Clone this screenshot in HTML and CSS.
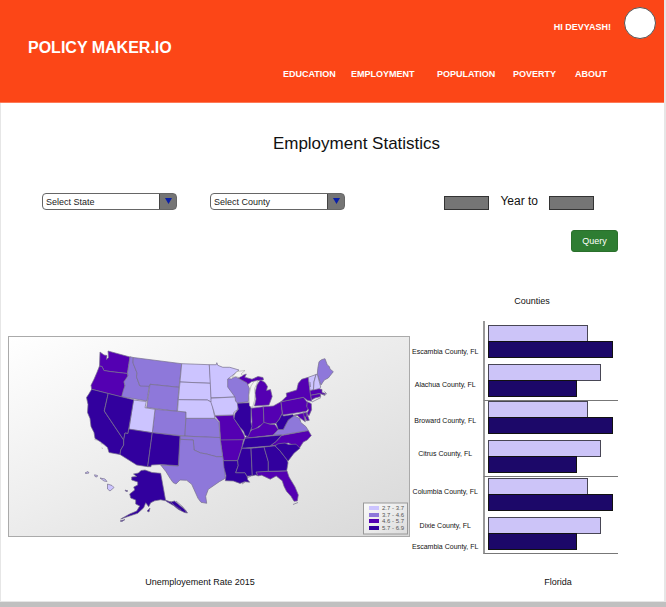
FILE: index.html
```html
<!DOCTYPE html>
<html lang="en">
<head>
<meta charset="utf-8">
<meta name="viewport" content="width=device-width, initial-scale=1">
<title>Policy Maker.io</title>
<link rel="stylesheet" href="styles.css">
</head>
<body>
<div class="page">
  <header class="header">
    <a class="brand" href="#">POLICY MAKER.IO</a>
    <div class="header-side">
      <div class="user"><span class="greeting">HI DEVYASH!</span><span class="avatar"></span></div>
      <nav class="nav">
        <a href="#">EDUCATION</a>
        <a href="#">EMPLOYMENT</a>
        <a href="#">POPULATION</a>
        <a href="#">POVERTY</a>
        <a href="#">ABOUT</a>
      </nav>
    </div>
  </header>
  <main class="main">
    <h1 class="title">Employment Statistics</h1>
    <form class="filters">
      <div class="filter-row">
        <div class="picker">
          <select aria-label="State"><option>Select State</option></select>
          <svg class="arrow" viewBox="0 0 17 16"><path d="M5 5h7l-3.500 6z"/></svg>
        </div>
        <div class="picker">
          <select aria-label="County"><option>Select County</option></select>
          <svg class="arrow" viewBox="0 0 17 16"><path d="M5 5h7l-3.500 6z"/></svg>
        </div>
        <div class="years">
          <input type="text" id="from-year" aria-label="From year">
          <label for="to-year">Year to</label>
          <input type="text" id="to-year">
        </div>
      </div>
      <button class="query" type="button">Query</button>
    </form>
    <div class="charts">
      <figure class="map-figure">
        <svg class="map" viewBox="8 336 402 201" role="img" aria-label="Unemployment rate by state">
          <defs>
            <linearGradient id="sky" x1="0" y1="0" x2="1" y2="1">
              <stop offset="0" stop-color="#fff"/><stop offset="1" stop-color="#d8d8d8"/>
            </linearGradient>
            <linearGradient id="key" x1="0" y1="0" x2="1" y2="1">
              <stop offset="0" stop-color="#fafafa"/><stop offset="1" stop-color="#dcdcdc"/>
            </linearGradient>
          </defs>
          <rect x="8.500" y="336.500" width="401" height="200" fill="url(#sky)" stroke="#aaa"/>
          <g class="states">
            <g class="r3">
              <path d="M100 352l4 3 3 .5-.5 4 2-2-.5-6.500L130 357l-2.500 16.500-17.500-2-6-1-2-4-2.500-.5z"/>
              <path d="M99.500 366l2.500.5 2 4 6 1 17.500 2 .5 3-4 5.500 1 4-1.500 5-1.800 6-30-7.700-.7-4 3-6 3-7z"/>
              <path d="M215 416l18.500-1 .5 3.500 6 9 4 7.500 1 3-2 2-22.500.3-1-18.500z"/>
              <path d="M220.300 440l23.200-.3-1.800 8.600-4 12.400h-14.500l-.5-4z"/>
              <path d="M238 378l4.500-2.500 3.800-1.500-1.500 3.200 7.200 2 6-2.700 5 1 .5 2.500-6 .5-6 1.200-4.500 3.300-4-3.500z"/>
              <path d="M254.500 406l1.500-7-1-6 2-8 2-3 1.500-2 4.500 2.500 2.500 4-1 4 4-1 1.700 7-3.200 8.500z"/>
              <path d="M251 408.300l12.300-1.600.7 16.600-5 3-4 3-4 .5 1-8z"/>
              <path d="M263.300 406.700l10-.7 7.700-4.300 1.300 11.600-3 6-3.300 4-6 .7-6-1z"/>
              <path d="M245 438.300l3-4 4-4.500 7-2.500 5-5 6 2 5 .3 3.300 5-5 5.500z"/>
              <path d="M281 401.700l22.300-4.400 4 5-.5 4 2 2-2.500 3-23.600 3.700z"/>
              <path d="M281 401.700l5.700-5.500-.5-3 10.500-3.200 1.600-6.700 3.400-4 6.600-2 1.700 13.500 1.700 10.500-4.400-1-4-3z"/>
              <path d="M307.300 401.700l4 2 .3 6-2.600 6-2.200-2.500 2-3.200-2-3z"/>
              <path d="M293.500 415.300l13-3 2.800 8-2.500.5-2-4.500.5 5.500-5.500-4-2-2z"/>
              <path d="M310 390.500l8-2 4 1 0 3 3.500 1-1 1.500-5-1.500-9 1.800z"/>
              <path d="M310.700 395.300l9.500-1.700.5 3-5.700 1.400-3.500 2z"/>
              <path d="M270 446l6-4.500 5.700-6 26.600-5 3 5-4 4.500-4 2-4 6.300-11-5.300-10 2z"/>
              <path d="M256 471.700l31-.8 2 6 6 10 3.300 8-1 6-3.300.4-3-5-4.500-5-2.500-5-1.800-5.500-6-4.800-6 3.200-8.500-4-4 .8z"/>
            </g>
            <g class="r2">
              <path d="M130 356.700l3.300.8-.3 5 4 10-.5 4 3 9h9.800l-2.300 15.500-25.300-4.300 1.800-7 1.500-4-1-4 4-6-.5-3z"/>
              <path d="M133.300 357.500l48.400 6.200-2.700 23.600-29-3-.7 2-9.300-.3-3.500-9 .5-4-4-10z"/>
              <path d="M150 384.300l29 3-2 24-30.300-3.800z"/>
              <path d="M155 409.300l31 2.700-1 24-32.700-3.300z"/>
              <path d="M186 418.300h29l2 2 2 2 1 15.500-35-1.800.5-11z"/>
              <path d="M180 436l40 1.500 2.700 19.200h-6l-5-1-5-1.700-6-1-6.700-3-.7-10-13.300-.7z"/>
              <path d="M180 439.300l13.300.7.7 10 6.700 3 6 1 10 2.700h6l2 10 .6 11.600-6 3.400-11 7.600-2.600 7 1 7-5.700-1-3-4-6.300-14-5-4-6.700-.3-4 4-3-1.500-3-4.200-4-6.600-5.300-6.700 17.600 1z"/>
              <path d="M227.300 378.500l4 .5 4-2.300 11.500 6 2.500 5.600-1 13.400-11.500 1.600-3-6.600-6.300-5-1-6z"/>
              <path d="M273.300 435l5-5.500h5l2.500-5 2.500-4.500 5-4.500 6.500 3 1 4 5 4 2.500 4-26.600 4.500z"/>
              <path d="M317.300 374.300l.5-6 1.200-6.600 2.500-2 3.500-1 2.300 6.300 2 1.500.7 2.500 3.300 2.700-5 6.300-4 2-3.300 5z"/>
            </g>
            <g class="r1">
              <path d="M133.300 400l13 1.500-1.300 6.200 10 1.600-2.700 23.400-23.300-3.400z"/>
              <path d="M181.700 363.700l27.600 1 1.500 18.600-30.800-1.300z"/>
              <path d="M180 382l30.700 1.300.5 15 .5 4-4.400-2.300-29-.3z"/>
              <path d="M178.300 399.700l29 .3 4.400 2.300 3.300 16h-29v-6.300l-8.500-.8z"/>
              <path d="M209.300 364.700h7l.5-2 1 2.600 5 2 7 0 9.200 2.700-7.300 6-4 3 0 8 7.300 10-24 .8z"/>
              <path d="M211 398.200l24-1.200.5 4 3.700 4-2 5-3 2-1 3-18.200.5-2-7-2-6z"/>
              <path d="M308.300 377.300l7.700-2.800-2 7-.5 8-3.500 1z"/>
              <path d="M316 374.500l1.300-.3 3.400 12.800-1 1.500-6.200 1.500.5-8z"/>
              <path d="M107.500 484l4.500 1.500 2 2-4 3.500-2.500-2z"/>
              <path d="M85 473l3-1.500 1 1.500-3 .5zM94.500 474.800l3 .7-.5 1.500-2-.5zM100 478l5 1 2 2.500-3-.5z"/>
            </g>
            <g class="r4">
              <path d="M91.700 389.300l16.500 4.200-4 17.500 19.500 29v5l-3 5-.7 4.500-11-2-1.500-5-3.500-3-4-3-5-3-1-6-3-6-1-8-2.500-6 .5-8-1.500-7 2-3z"/>
              <path d="M108.200 393.500l25.500 6.300-5 29.200-.7 4.500-3-.5-1.300 7-19.400-29z"/>
              <path d="M128.700 429l23.600 3.700-4.600 34-11-1.700-16.700-10.500.7-4.500 3-5v-5l1.300-7 3 .5z"/>
              <path d="M152.300 432.700l27.700 3.300-1.700 29.700-17.500-1.200-9.500.5-.3 1.700h-3.300z"/>
              <path d="M237.300 403.300l12-.6 1.700 5.600v14l1 4-2 6-2 4.500-3-1.500-1.500-4-3.500-4-6-8.700 1-5 3.300-4.300z"/>
              <path d="M276 423.300l3.300-4 3-6 1 2.700 9.500-1.500 1 1.500-5.500 4-2.500 4.500-2.500 5h-5z"/>
              <path d="M245 438.300l36.700-3.300-5.700 6.500-6 4.500-28.300 2.300z"/>
              <path d="M223.300 460.700h14.400l.5 5-2.500 7h9.500l2 4 .5 3 2 2.500-5-.5-4.700 1.700-6.700-2.400-8-.3.700-5-2-8z"/>
              <path d="M241.700 448.300h9.300l1.300 27.400-5.300.5-2-3.500h-9.300l2.500-7-.5-5z"/>
              <path d="M251 448.300l13-1.300 4.300 14.700v9.600l-12.300.7 1.500 3.500-2-.5-3.200.7z"/>
              <path d="M264 447l11-1.200 5 5 7 9 1 3-1.300 8-18.400.5v-9.600z"/>
              <path d="M275 445.800l3-2 7-.8 3.500 1.500 7.500-.3 4 4-6 5-6 8-8-10.400z"/>
              <path d="M133.500 474l5-1 2.500-2.500 4-.5 7 2.500 8.700.8 5 27.500-5-1-6 1-4 2-2 4-3-4-2 5-6 5.500-9 3-8 2.700 9-5 7-3 3-5-4-2 0-4-5-2-1-4 5-4-1-3 4-2v-3l-6-2 0-3 5-.5z"/>
              <path d="M165.500 500l5 2 4-1 6 5 5 4 2 3-3-.5-6-3-5-4-7-4zM125 490l3 1-2 .5zM120 521l5-1.500-3 2zM147 511l3-3-1 4z"/>
            </g>
            <path class="coast" d="M312 402l4-2 5-2.500M322 394l3 1.500 1.500-2-2-2M303 411l1 5 1 5M304 417l3 4M306 413l1 4M293 504.500l5-2M170 501l5 5 6 4M176 501l7 6 3 5M310 382l.5 5M242 484l3-2M247 478l4-2"/>
            <path class="islets" d="M94.500 439.500l2.500.5M101 443l1 1.500M102 447.500l.5 1.500"/>
          </g>
          <path class="lake" d="M249.500 406l-.5-11 2-9 3-4.500 4-1-1.500 4-2 4 .5 6-.5 6-2 7z"/>
          <path class="lake" d="M232 377.500l5-6 8-1-4 3.500 2 1.500-4 2-3-1z"/>
          <rect x="363.500" y="503" width="44" height="31" fill="url(#key)" stroke="#999"/>
          <g class="legend">
            <rect class="r1" x="369" y="506" width="10" height="4"/><text x="382" y="510">2.7 - 3.7</text>
            <rect class="r2" x="369" y="513" width="10" height="4"/><text x="382" y="517">3.7 - 4.6</text>
            <rect class="r3" x="369" y="519" width="10" height="4"/><text x="382" y="523">4.6 - 5.7</text>
            <rect class="r4" x="369" y="526" width="10" height="4"/><text x="382" y="530">5.7 - 6.9</text>
          </g>
        </svg>
        <figcaption>Unemployement Rate 2015</figcaption>
      </figure>
      <section class="counties">
        <h2>Counties</h2>
        <div class="chart">
          <ul class="labels">
            <li>Escambia County, FL</li>
            <li>Alachua County, FL</li>
            <li>Broward County, FL</li>
            <li>Citrus County, FL</li>
            <li>Columbia County, FL</li>
            <li>Dixie County, FL</li>
            <li>Escambia County, FL</li>
          </ul>
          <div class="plots">
            <div class="plot plot-first">
              <div class="pair"><i class="bar light" style="width:77%"></i><i class="bar dark" style="width:96%"></i></div>
              <div class="pair"><i class="bar light" style="width:87%"></i><i class="bar dark" style="width:68%"></i></div>
            </div>
            <div class="plot plot-mid">
              <div class="pair"><i class="bar light" style="width:77%"></i><i class="bar dark" style="width:96%"></i></div>
              <div class="pair"><i class="bar light" style="width:87%"></i><i class="bar dark" style="width:68%"></i></div>
            </div>
            <div class="plot plot-last">
              <div class="pair"><i class="bar light" style="width:77%"></i><i class="bar dark" style="width:96%"></i></div>
              <div class="pair"><i class="bar light" style="width:87%"></i><i class="bar dark" style="width:68%"></i></div>
            </div>
          </div>
        </div>
        <p class="region">Florida</p>
      </section>
    </div>
  </main>
</div>
</body>
</html>
```
FILE: styles.css
```css
* {
  box-sizing: border-box;
}

body {
  margin: 0;
  background: #c0c0c0;
  color: #111;
  font-family: "Liberation Sans", Arial, sans-serif;
  font-size: 9px;
}

.page {
  background: #fff;
  border: solid #e6e6e6;
  border-width: 0 2px 1px 1px;
}

.header {
  display: flex;
  justify-content: space-between;
  align-items: center;
  margin-left: -1px;
  padding-left: 28px;
  background: #fc4617;
  border-bottom: 1px solid #fd7a57;
  color: #fff;
  font-weight: bold;
}

.header a {
  color: inherit;
  text-decoration: none;
}

.brand {
  padding-bottom: 6px;
  font-size: 16px;
  line-height: 20px;
}

.header-side {
  padding: 7px 8px 22px 0;
}

.user {
  display: flex;
  justify-content: flex-end;
  align-items: flex-end;
  gap: 13px;
  line-height: 24px;
}

.avatar {
  width: 32px;
  height: 32px;
  border: 1px solid #555;
  border-radius: 50%;
  background: #fff;
}

.nav {
  display: grid;
  grid-template-columns: 68px 86px 76px 62px 34px;
  margin: 29px 47px 0 0;
  line-height: 12px;
}

.main {
  padding-top: 31px;
}

.title {
  margin: 0;
  padding-left: 48px;
  font-size: 17px;
  line-height: 20px;
  font-weight: normal;
  text-align: center;
}

.filters {
  display: flex;
  flex-direction: column;
  padding: 39px 46px 0 41px;
}

.filter-row {
  display: flex;
  gap: 33px;
  align-items: flex-start;
}

.picker {
  position: relative;
  display: flex;
  width: 135px;
}

.picker select {
  width: 100%;
  height: 17px;
  padding: 0 20px 0 3px;
  border: 1px solid #666;
  border-radius: 4px;
  appearance: none;
  background: linear-gradient(to left, #757575 16px, #444 16px, #444 17px, #fff 17px);
  color: #222;
  font: 9px "Liberation Sans", Arial, sans-serif;
}

.arrow {
  position: absolute;
  top: 0;
  right: 0;
  width: 17px;
  height: 16px;
  fill: #0a1fa8;
  pointer-events: none;
}

.years {
  display: flex;
  align-items: flex-end;
  gap: 11px;
  margin-left: auto;
  margin-right: 24px;
  font-size: 12px;
  line-height: 16px;
}

.years input {
  width: 45px;
  height: 14px;
  margin-bottom: -1px;
  padding: 0 3px;
  border: 1px solid #333;
  background: #757575;
  color: #fff;
  font-size: 9px;
}

.query {
  align-self: flex-end;
  width: 47px;
  height: 22px;
  margin-top: 20px;
  padding: 0;
  border: 1px solid #2a702c;
  border-radius: 3px;
  background: #2e7d32;
  color: #fff;
  font: 9px "Liberation Sans", Arial, sans-serif;
}

.charts {
  display: flex;
  justify-content: space-between;
  align-items: flex-end;
  padding: 43px 46px 13px 7px;
}

.map-figure {
  flex: 0 1 402px;
  margin: 0;
}

.map {
  display: block;
  width: 100%;
}

.states path {
  stroke: #77708c;
  stroke-width: 0.7;
  stroke-linejoin: round;
}

.states .coast,
.states .islets {
  fill: none;
}

.states .islets {
  stroke: #aaa;
}

.r1 { fill: #ccc4ff; }
.r2 { fill: #8e78da; }
.r3 { fill: #5400b2; }
.r4 { fill: #32009e; }

.lake {
  fill: #f3f3f3;
  stroke: #999;
  stroke-width: 0.5;
}

.legend text {
  fill: #555;
  font-size: 6px;
}

.map-figure figcaption {
  margin-top: 39px;
  padding-right: 18px;
  line-height: 12px;
  text-align: center;
}

.counties {
  width: 206px;
}

.counties h2 {
  margin: 0 0 14px;
  padding-left: 34px;
  font-size: 9px;
  line-height: 12px;
  font-weight: normal;
  text-align: center;
}

.chart {
  display: flex;
}

.labels {
  display: grid;
  grid-template-rows: 33px 33px 39px 27px 49px 19px 23px;
  align-items: center;
  flex: 0 0 66px;
  margin: 0;
  padding: 14px 0 0;
  list-style: none;
  font-size: 7px;
  line-height: 8px;
  text-align: center;
  white-space: nowrap;
}

.plots {
  flex: 1;
  margin-left: 5px;
}

.plot {
  display: flex;
  flex-direction: column;
  gap: 6px;
  padding-left: 3px;
  border-left: 2px solid #999;
  border-bottom: 1px solid #777;
}

.plot-first {
  padding: 4px 0 3px 3px;
}

.plot-mid {
  padding-bottom: 3px;
}

.plot-last {
  padding: 1px 0 3px 3px;
}

.pair {
  display: flex;
  flex-direction: column;
}

.bar {
  height: 17px;
  border: 1px solid #484655;
}

.dark {
  margin-top: -1px;
  border-color: #111;
  background: #1c0869;
}

.light {
  background: #ccc4f8;
}

.region {
  margin: 18px 0 0;
  padding-left: 86px;
  line-height: 12px;
  text-align: center;
}
```
